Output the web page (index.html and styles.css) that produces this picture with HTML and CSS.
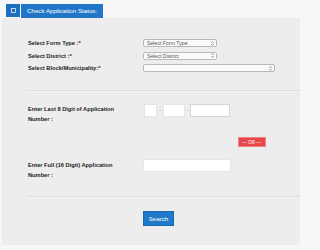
FILE: index.html
```html
<!DOCTYPE html>
<html>
<head>
<meta charset="utf-8">
<link rel="stylesheet" href="styles.css">
</head>
<body>
<div class="tab">
  <span class="tab-icon"><svg width="5" height="5" viewBox="0 0 5 5"><rect x="0.5" y="0.5" width="4" height="4" fill="none" stroke="#fff" stroke-width="0.7"/></svg></span>
  <span class="tab-title">Check Application Status:</span>
</div>
<div class="panel">
  <div class="selects">
    <div class="row">
      <span class="label">Select Form Type :*</span>
      <div class="select short"><span>Select Form Type</span><svg class="arr" width="3" height="5" viewBox="0 0 3 5"><path d="M0.3 1.9L1.5 0.7L2.7 1.9M0.3 3.1L1.5 4.3L2.7 3.1" fill="none" stroke="#555" stroke-width="0.6"/></svg></div>
    </div>
    <div class="row">
      <span class="label">Select District :*</span>
      <div class="select short"><span>Select District</span><svg class="arr" width="3" height="5" viewBox="0 0 3 5"><path d="M0.3 1.9L1.5 0.7L2.7 1.9M0.3 3.1L1.5 4.3L2.7 3.1" fill="none" stroke="#555" stroke-width="0.6"/></svg></div>
    </div>
    <div class="row">
      <span class="label">Select Block/Municipality:*</span>
      <div class="select long"><span></span><svg class="arr" width="3" height="5" viewBox="0 0 3 5"><path d="M0.3 1.9L1.5 0.7L2.7 1.9M0.3 3.1L1.5 4.3L2.7 3.1" fill="none" stroke="#555" stroke-width="0.6"/></svg></div>
    </div>
  </div>
  <div class="divider"></div>
  <div class="row top digits">
    <span class="label two">Enter Last 8 Digit of Application<br>Number :</span>
    <div class="inputs">
      <span class="box b1"></span><span class="dash">-</span><span class="box b2"></span><span class="dash">-</span><span class="box b3"></span>
    </div>
  </div>
  <div class="or-row"><span class="or">— OR —</span></div>
  <div class="row top full">
    <span class="label two">Enter Full (16 Digit) Application<br>Number :</span>
    <span class="box b4"></span>
  </div>
  <div class="divider second"></div>
  <div class="btn-row"><span class="search">Search</span></div>
</div>
</body>
</html>
```
FILE: styles.css
```css
html, body {
  margin: 0;
  padding: 0;
}
body {
  background: #f7f7f7;
  font-family: "Liberation Sans", Arial, sans-serif;
  width: 300px;
  height: 250px;
  overflow: hidden;
}
.tab {
  display: flex;
  margin: 4px 0 0 6px;
  height: 14px;
}
.tab-icon {
  width: 14px;
  height: 13px;
  background: #1d6fbf;
  display: flex;
  align-items: center;
  justify-content: center;
  margin-right: 1px;
}
.tab-icon svg {
  display: block;
  margin-top: -1px;
}
.tab-title {
  background: #2176c7;
  color: #fff;
  font-size: 6.2px;
  line-height: 14px;
  padding: 0 6px;
  height: 14px;
  white-space: nowrap;
}
.panel {
  margin-left: 2px;
  background: #ededed;
  height: 227px;
  padding: 21px 0 0 26px;
  box-sizing: border-box;
}
.selects {
  display: flex;
  flex-direction: column;
  gap: 4.5px;
}
.row {
  display: flex;
  align-items: center;
}
.row.top {
  align-items: flex-start;
}
.label {
  width: 115px;
  flex: none;
  font-size: 5.7px;
  font-weight: bold;
  color: #222;
  white-space: nowrap;
}
.label.two {
  line-height: 10px;
}
.select {
  height: 8px;
  box-sizing: border-box;
  border: 0.6px solid #b9b9b9;
  border-radius: 2px;
  background: #fafafa;
  display: flex;
  align-items: center;
  justify-content: space-between;
  padding: 0 2px 0 3px;
  font-size: 5.2px;
  color: #555;
  white-space: nowrap;
}
.select.short {
  width: 74px;
}
.select.long {
  width: 132px;
}
.arr {
  display: block;
  flex: none;
}
.divider {
  margin-top: 18px;
  height: 1px;
  background: #dcdcdc;
  border-bottom: 1px solid #f5f5f5;
}
.digits {
  margin-top: 12px;
}
.inputs {
  display: flex;
  align-items: center;
}
.box {
  display: block;
  height: 12.6px;
  background: #fff;
  box-sizing: border-box;
  border: 0.5px solid #e6e6e6;
}
.b1 {
  width: 13.6px;
  margin-left: 0.7px;
}
.b2 {
  width: 22px;
}
.b3 {
  width: 39.4px;
  border: 1px solid #d6d6d6;
}
.b4 {
  width: 87.4px;
  height: 13px;
  margin-left: 0.3px;
  margin-top: -0.7px;
}
.dash {
  width: 5.5px;
  text-align: center;
  font-size: 5px;
  color: #888;
}
.or-row {
  margin-top: 12.7px;
  padding-left: 209.7px;
  display: flex;
}
.or {
  display: block;
  width: 28px;
  height: 10px;
  line-height: 10px;
  background: #e8464a;
  color: #fff;
  font-size: 4.6px;
  text-align: center;
  white-space: nowrap;
  border: 0.5px solid #f08080;
  box-sizing: border-box;
}
.full {
  margin-top: 13.3px;
}
.divider.second {
  margin-top: 15.7px;
}
.btn-row {
  margin-top: 13.3px;
  padding-left: 115.3px;
  display: flex;
}
.search {
  display: block;
  width: 30.4px;
  height: 14.7px;
  line-height: 14.7px;
  background: #1f78c8;
  color: #fff;
  font-size: 6.2px;
  text-align: center;
  border: 0.5px solid #1a68b0;
  box-sizing: border-box;
}
```
